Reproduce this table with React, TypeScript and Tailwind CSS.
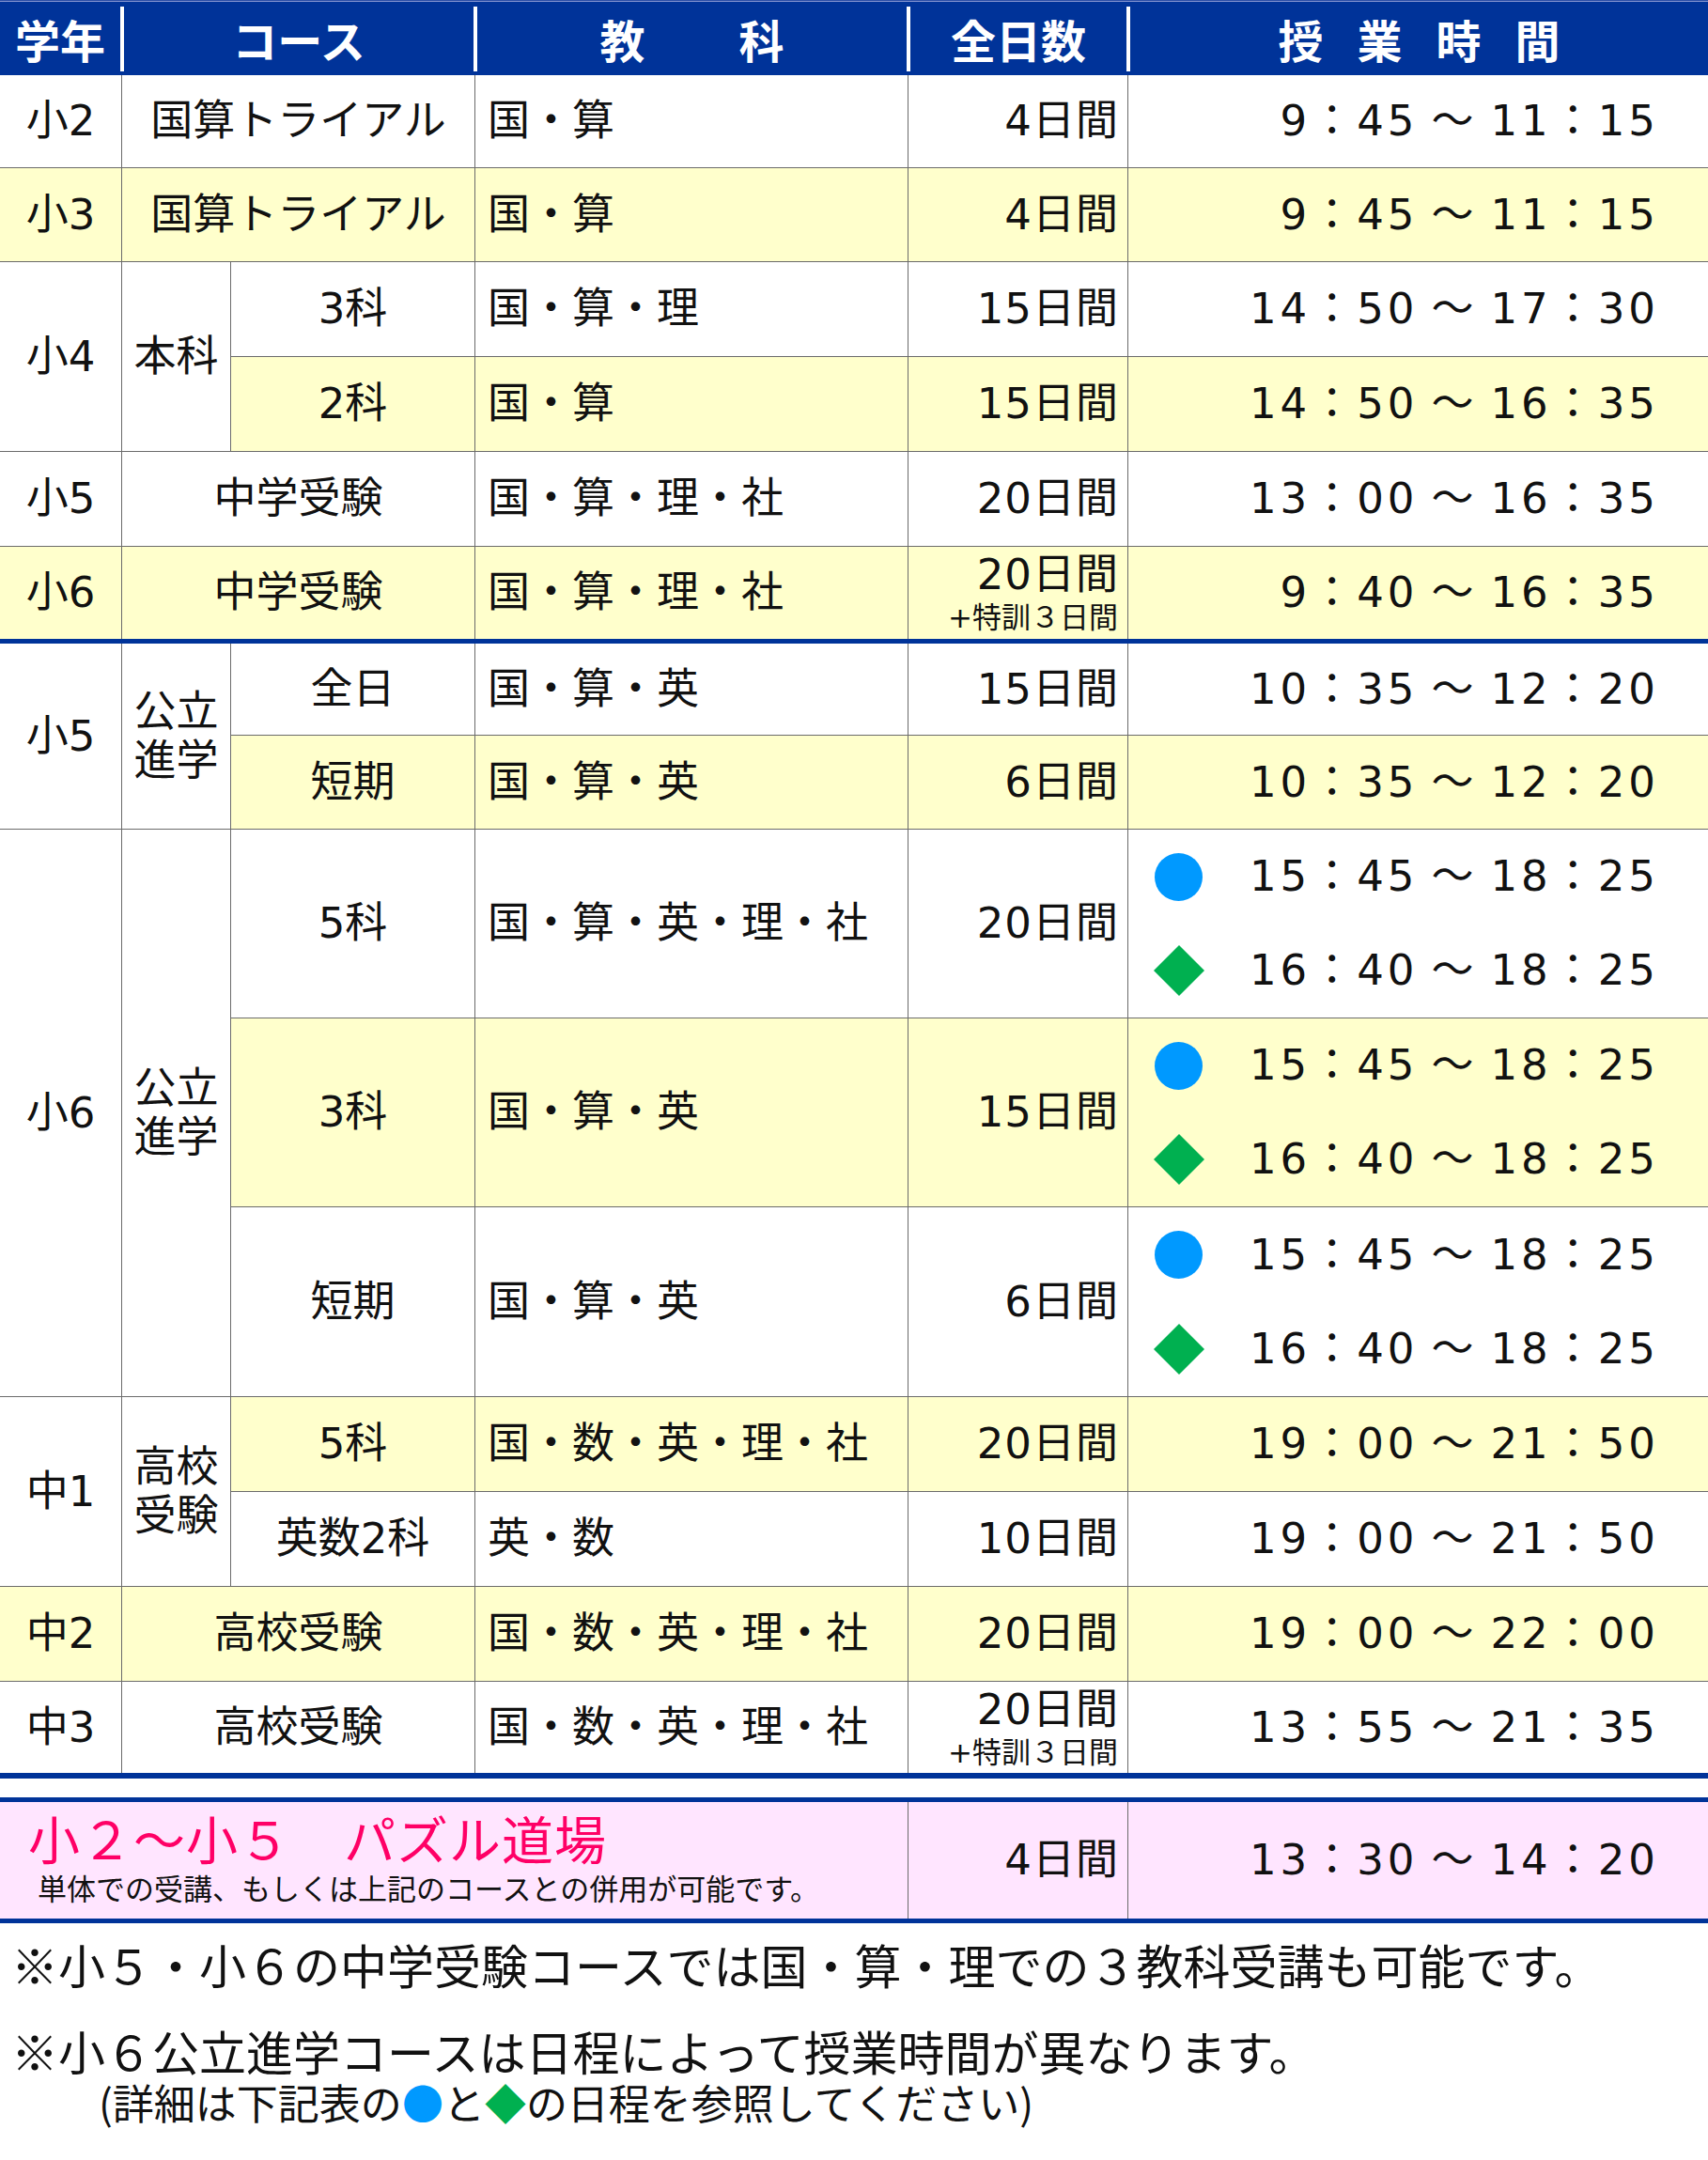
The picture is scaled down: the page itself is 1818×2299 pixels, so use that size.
import React from "react";

const B = "border-[#6b6b6b]";

function Cell({
  children,
  className = "",
  r = true,
  b = true,
  y = false,
}: {
  children?: React.ReactNode;
  className?: string;
  r?: boolean;
  b?: boolean;
  y?: boolean;
}) {
  return (
    <div
      className={`flex items-center ${r ? "border-r" : ""} ${b ? "border-b" : ""} ${B} ${
        y ? "bg-[#ffffcc]" : "bg-white"
      } ${className}`}
    >
      {children}
    </div>
  );
}

function Time({ v }: { v: string }) {
  const [a, b] = v.split("～");
  return (
    <span className="whitespace-nowrap tracking-[4px]">
      {a}
      <span className="px-[14px]">～</span>
      {b}
    </span>
  );
}

function TimeCell({ v, y = false, b = true }: { v: string; y?: boolean; b?: boolean }) {
  return (
    <Cell r={false} b={b} y={y} className="justify-end pr-[52px]">
      <Time v={v} />
    </Cell>
  );
}

function Days({ v, y = false, b = true, extra = false }: { v: string; y?: boolean; b?: boolean; extra?: boolean }) {
  return (
    <Cell y={y} b={b} className="justify-end pr-[9px]">
      {extra ? (
        <div className="flex flex-col items-end leading-none">
          <span className="tracking-[1px]">{v}</span>
          <span className="mt-[8px] pr-[1px] text-[31px]">+特訓３日間</span>
        </div>
      ) : (
        <span className="tracking-[1px]">{v}</span>
      )}
    </Cell>
  );
}

function Subj({ v, y = false, b = true }: { v: string; y?: boolean; b?: boolean }) {
  return (
    <Cell y={y} b={b} className="pl-[13px]">
      {v}
    </Cell>
  );
}

function Circle() {
  return <span className="block h-[51px] w-[51px] rounded-full bg-[#0099ff]" />;
}

function Diamond() {
  return (
    <svg width="54" height="54" viewBox="0 0 54 54" className="block">
      <polygon points="27,0 54,27 27,54 0,27" fill="#00b050" />
    </svg>
  );
}

function DualTime({ y = false }: { y?: boolean }) {
  return (
    <div className={`flex flex-col border-b ${B} ${y ? "bg-[#ffffcc]" : "bg-white"}`}>
      <div className="flex flex-1 items-center justify-between pl-[28px] pr-[52px]">
        <Circle />
        <Time v="15：45～18：25" />
      </div>
      <div className="flex flex-1 items-center justify-between pl-[27px] pr-[52px]">
        <Diamond />
        <Time v="16：40～18：25" />
      </div>
    </div>
  );
}

function TwoLine({ a, b }: { a: string; b: string }) {
  return (
    <div className="text-center leading-[52px]">
      {a}
      <br />
      {b}
    </div>
  );
}

function Header() {
  const div = <div className="h-[69px] w-[4px] bg-white" />;
  return (
    <div className="flex h-[80px] flex-col bg-[#003399] font-['Noto_Sans_CJK_JP',sans-serif] text-[48px] font-bold text-white">
      <div className="h-[1px] bg-[#2b4ea6]" />
      <div className="h-[1px] bg-[#8092cf]" />
      <div className="flex flex-1 items-center">
        <div className="flex w-[128px] justify-center">学年</div>
        {div}
        <div className="flex w-[372px] justify-center">コース</div>
        {div}
        <div className="flex w-[457px] justify-center gap-[100px]">
          <span>教</span>
          <span>科</span>
        </div>
        {div}
        <div className="flex w-[230px] justify-center">全日数</div>
        {div}
        <div className="flex flex-1 justify-center gap-[36px]">
          <span>授</span>
          <span>業</span>
          <span>時</span>
          <span>間</span>
        </div>
      </div>
    </div>
  );
}

export default function App() {
  return (
    <div className="w-[1818px] bg-white pb-[30px] text-[#111]">
      <Header />
      <div className="font-['DejaVu_Sans','Noto_Sans_CJK_JP',sans-serif] text-[45px]">
        {/* Section A */}
        <div className="grid grid-cols-[130px_116px_260px_461px_234px_617px] grid-rows-[99px_100px_101px_101px_101px_98px]">
          {/* 小2 */}
          <Cell className="justify-center">小2</Cell>
          <Cell className="col-span-2 justify-center">国算トライアル</Cell>
          <Subj v="国・算" />
          <Days v="4日間" />
          <TimeCell v="9：45～11：15" />
          {/* 小3 */}
          <Cell y className="justify-center">小3</Cell>
          <Cell y className="col-span-2 justify-center">国算トライアル</Cell>
          <Subj y v="国・算" />
          <Days y v="4日間" />
          <TimeCell y v="9：45～11：15" />
          {/* 小4 */}
          <Cell className="row-span-2 justify-center">小4</Cell>
          <Cell className="row-span-2 justify-center">本科</Cell>
          <Cell className="justify-center">3科</Cell>
          <Subj v="国・算・理" />
          <Days v="15日間" />
          <TimeCell v="14：50～17：30" />
          <Cell y className="justify-center">2科</Cell>
          <Subj y v="国・算" />
          <Days y v="15日間" />
          <TimeCell y v="14：50～16：35" />
          {/* 小5 */}
          <Cell className="justify-center">小5</Cell>
          <Cell className="col-span-2 justify-center">中学受験</Cell>
          <Subj v="国・算・理・社" />
          <Days v="20日間" />
          <TimeCell v="13：00～16：35" />
          {/* 小6 */}
          <Cell y b={false} className="justify-center">小6</Cell>
          <Cell y b={false} className="col-span-2 justify-center">中学受験</Cell>
          <Subj y b={false} v="国・算・理・社" />
          <Days y b={false} v="20日間" extra />
          <TimeCell y b={false} v="9：40～16：35" />
        </div>
        <div className="h-[5px] bg-[#003399]" />
        {/* Section B */}
        <div className="grid grid-cols-[130px_116px_260px_461px_234px_617px] grid-rows-[98px_100px_201px_201px_202px_101px_101px_101px_97px]">
          {/* 小5 公立 */}
          <Cell className="row-span-2 justify-center">小5</Cell>
          <Cell className="row-span-2 justify-center">
            <TwoLine a="公立" b="進学" />
          </Cell>
          <Cell className="justify-center">全日</Cell>
          <Subj v="国・算・英" />
          <Days v="15日間" />
          <TimeCell v="10：35～12：20" />
          <Cell y className="justify-center">短期</Cell>
          <Subj y v="国・算・英" />
          <Days y v="6日間" />
          <TimeCell y v="10：35～12：20" />
          {/* 小6 公立 */}
          <Cell className="row-span-3 justify-center">小6</Cell>
          <Cell className="row-span-3 justify-center">
            <TwoLine a="公立" b="進学" />
          </Cell>
          <Cell className="justify-center">5科</Cell>
          <Subj v="国・算・英・理・社" />
          <Days v="20日間" />
          <DualTime />
          <Cell y className="justify-center">3科</Cell>
          <Subj y v="国・算・英" />
          <Days y v="15日間" />
          <DualTime y />
          <Cell className="justify-center">短期</Cell>
          <Subj v="国・算・英" />
          <Days v="6日間" />
          <DualTime />
          {/* 中1 */}
          <Cell className="row-span-2 justify-center">中1</Cell>
          <Cell className="row-span-2 justify-center">
            <TwoLine a="高校" b="受験" />
          </Cell>
          <Cell y className="justify-center">5科</Cell>
          <Subj y v="国・数・英・理・社" />
          <Days y v="20日間" />
          <TimeCell y v="19：00～21：50" />
          <Cell className="justify-center">英数2科</Cell>
          <Subj v="英・数" />
          <Days v="10日間" />
          <TimeCell v="19：00～21：50" />
          {/* 中2 */}
          <Cell y className="justify-center">中2</Cell>
          <Cell y className="col-span-2 justify-center">高校受験</Cell>
          <Subj y v="国・数・英・理・社" />
          <Days y v="20日間" />
          <TimeCell y v="19：00～22：00" />
          {/* 中3 */}
          <Cell b={false} className="justify-center">中3</Cell>
          <Cell b={false} className="col-span-2 justify-center">高校受験</Cell>
          <Subj b={false} v="国・数・英・理・社" />
          <Days b={false} v="20日間" extra />
          <TimeCell b={false} v="13：55～21：35" />
        </div>
        <div className="h-[6px] bg-[#003399]" />
        <div className="h-[20px] bg-white" />
        <div className="h-[5px] bg-[#003399]" />
        {/* Puzzle row */}
        <div className="flex h-[124px] bg-[#ffe5ff]">
          <div className={`flex w-[967px] flex-col border-r ${B} pt-[10px] font-['Noto_Sans_CJK_JP',sans-serif]`}>
            <div className="whitespace-pre pl-[30px] text-[55px] leading-none tracking-[1px] text-[#ff0066]">
              小２～小５　パズル道場
            </div>
            <div className="mt-[10px] pl-[40px] text-[31px] leading-none text-[#111]">
              単体での受講、もしくは上記のコースとの併用が可能です。
            </div>
          </div>
          <div className={`flex w-[234px] items-center justify-end border-r ${B} pr-[9px]`}>
            <span className="tracking-[1px]">4日間</span>
          </div>
          <div className="flex flex-1 items-center justify-end pr-[52px]">
            <Time v="13：30～14：20" />
          </div>
        </div>
        <div className="h-[5px] bg-[#003399]" />
      </div>
      {/* Notes */}
      <div className="font-['Noto_Sans_CJK_JP',sans-serif] text-[#111]">
        <div className="pl-[12px] pt-[18px] text-[50px] leading-none">
          ※小５・小６の中学受験コースでは国・算・理での３教科受講も可能です。
        </div>
        <div className="mt-[42px] pl-[12px] text-[50px] leading-none">
          ※小６公立進学コースは日程によって授業時間が異なります。
        </div>
        <div className="mt-[8px] pl-[105px] text-[44px] leading-none">
          (詳細は下記表の<span className="text-[#0099ff]">●</span>と<span className="text-[#00b050]">◆</span>
          の日程を参照してください)
        </div>
      </div>
    </div>
  );
}
